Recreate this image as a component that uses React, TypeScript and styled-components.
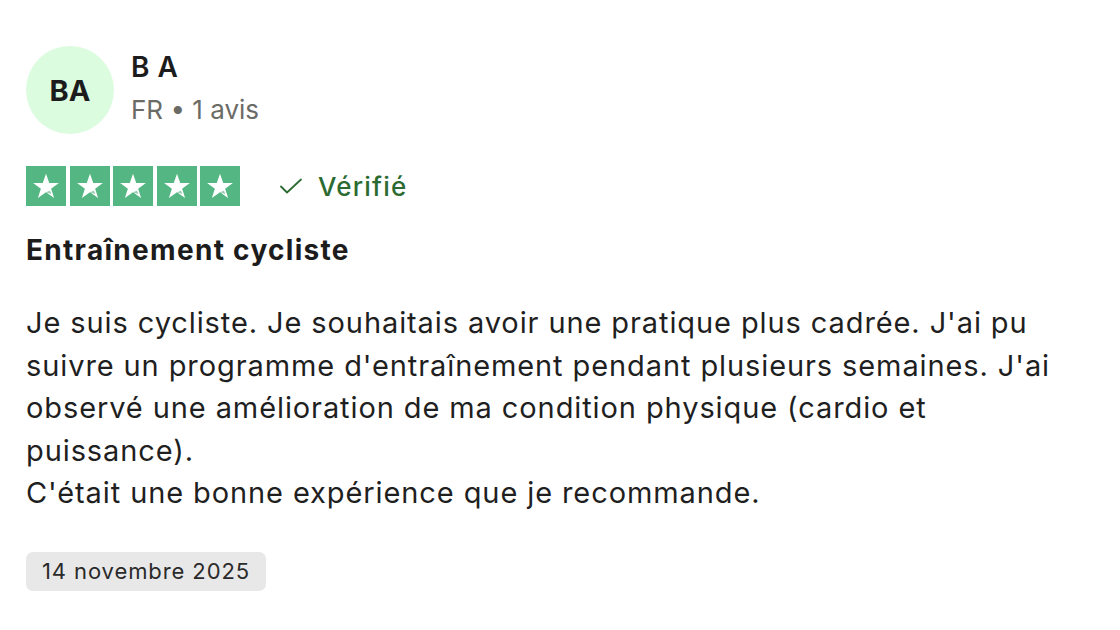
import React from "react";
import styled, { createGlobalStyle } from "styled-components";

const Global = createGlobalStyle`
  html, body { margin: 0; padding: 0; background: #ffffff; }
  body { font-family: Inter, "Noto Sans", sans-serif; color: #1c1c1c; }
`;

const Card = styled.article`
  width: 1120px;
  height: 630px;
  box-sizing: border-box;
  padding: 46px 26px 0 26px;
  display: flex;
  flex-direction: column;
`;

const Header = styled.header`
  display: flex;
  align-items: center;
  gap: 17px;
`;

const Avatar = styled.div`
  width: 88px;
  height: 88px;
  border-radius: 50%;
  background: #dcfce0;
  display: flex;
  align-items: center;
  justify-content: center;
  font-size: 29px;
  font-weight: 700;
  color: #1c1c1c;
`;

const Who = styled.div`
  display: flex;
  flex-direction: column;
  gap: 9px;
`;

const Name = styled.div`
  font-size: 28px;
  font-weight: 600;
  line-height: 36px;
  margin-top: -5px;
  letter-spacing: 0.5px;
`;

const Meta = styled.div`
  font-size: 26px;
  color: #6b6b66;
  line-height: 32px;
`;

const RatingRow = styled.div`
  display: flex;
  align-items: center;
  margin-top: 32px;
  gap: 39px;
`;

const Stars = styled.div`
  display: flex;
  gap: 3.5px;
`;

const StarBox = styled.div`
  width: 40px;
  height: 40px;
  background: #54b783;
  display: flex;
  align-items: center;
  justify-content: center;
`;

const Verified = styled.div`
  display: flex;
  align-items: center;
  gap: 15px;
  color: #2b6b31;
  font-size: 26px;
  font-weight: 500;
  letter-spacing: 1.2px;
`;

const Title = styled.h2`
  margin: 27px 0 0 0;
  font-size: 28px;
  font-weight: 700;
  line-height: 34px;
  letter-spacing: 1.3px;
`;

const Body = styled.p`
  margin: 35px 0 0 0;
  font-size: 29px;
  line-height: 42.5px;
  font-weight: 400;
  color: #1f1f1f;
  letter-spacing: 0.9px;
`;

const DateBadge = styled.div`
  align-self: flex-start;
  margin-top: 37px;
  background: #e8e8e8;
  border-radius: 7px;
  padding: 0 16px;
  height: 39px;
  display: flex;
  align-items: center;
  font-size: 22px;
  font-weight: 400;
  color: #2a2a2a;
  letter-spacing: 0.9px;
`;

const Star = () => (
  <svg width="30" height="30" viewBox="0 0 24 24">
    <path d="M12 2.2l2.6 7.3h7.7l-6.2 4.6 2.4 7.5L12 17l-6.5 4.6 2.4-7.5L1.7 9.5h7.7z" fill="#fff" />
    <path d="M15.2 15.7l1.0 2.6L12 17z" fill="#3e9a69" opacity="0.55" />
  </svg>
);

const Check = () => (
  <svg width="24" height="24" viewBox="0 0 24 24" fill="none">
    <path d="M2 12.5l6 6L22 5.5" stroke="#2b6b31" strokeWidth="1.8" strokeLinecap="round" strokeLinejoin="round" />
  </svg>
);

export default function App() {
  return (
    <>
      <Global />
      <Card>
        <Header>
          <Avatar>BA</Avatar>
          <Who>
            <Name>B A</Name>
            <Meta>FR • 1 avis</Meta>
          </Who>
        </Header>
        <RatingRow>
          <Stars>
            {[0, 1, 2, 3, 4].map((i) => (
              <StarBox key={i}>
                <Star />
              </StarBox>
            ))}
          </Stars>
          <Verified>
            <Check />
            Vérifié
          </Verified>
        </RatingRow>
        <Title>Entraînement cycliste</Title>
        <Body>
          Je suis cycliste. Je souhaitais avoir une pratique plus cadrée. J'ai pu
          <br />
          suivre un programme d'entraînement pendant plusieurs semaines. J'ai
          <br />
          observé une amélioration de ma condition physique (cardio et
          <br />
          puissance).
          <br />
          C'était une bonne expérience que je recommande.
        </Body>
        <DateBadge>14 novembre 2025</DateBadge>
      </Card>
    </>
  );
}
